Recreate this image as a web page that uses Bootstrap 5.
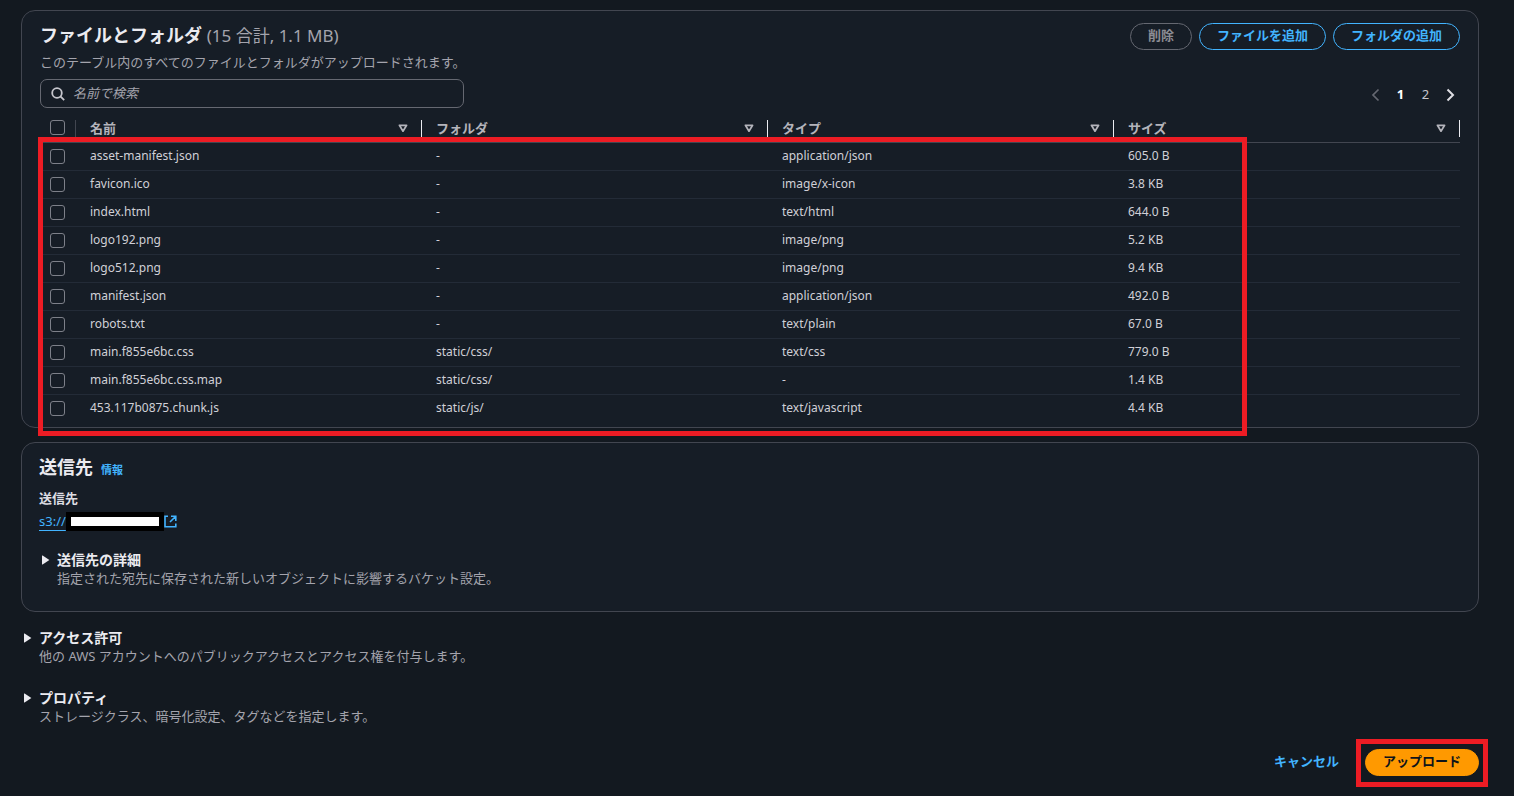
<!DOCTYPE html>
<html lang="ja" data-bs-theme="dark">
<head>
<meta charset="utf-8">
<meta name="viewport" content="width=device-width, initial-scale=1">
<title>アップロード</title>
<link href="https://cdn.jsdelivr.net/npm/bootstrap@5.3.0/dist/css/bootstrap.min.css" rel="stylesheet">
<style>
  body { background: #131920; color: #dedee3; font: 13px/18px "Noto Sans", "Noto Sans CJK JP", sans-serif; padding: 10px 35px 20px 21px; }
  a { color: #42b4ff; text-underline-offset: 4px; }
  .panel { --bs-card-bg: #161d26; --bs-card-border-color: #424650; --bs-card-border-radius: 14px; margin-bottom: 14px; padding: 12px 18px 4px; color: inherit; }
  .panel-target { padding-left: 17px; margin-bottom: 17px; }
  .title { font-size: 18px; line-height: 24px; font-weight: 700; color: #ebebf0; margin: 0; }
  .title span { font-size: 17px; font-weight: 400; }
  .muted, .title span { color: #a4a4ad; }
  .actions { gap: 7px; }
  .pill { --bs-btn-font-size: 13px; --bs-btn-line-height: 23px; --bs-btn-padding-x: 17px; --bs-btn-font-weight: 700; --bs-btn-border-radius: 14px; --bs-btn-color: #42b4ff; --bs-btn-border-color: #42b4ff; --bs-btn-disabled-color: #8c8c94; --bs-btn-disabled-border-color: #656871; --bs-btn-disabled-opacity: 1; padding-top: 0; padding-bottom: 2px; }
  .pill-main { --bs-btn-color: #0f141a; --bs-btn-bg: #ff9900; --bs-btn-border-color: #ff9900; --bs-btn-hover-bg: #ffac33; }
  .pill-link { --bs-btn-border-color: transparent; }
  .note { margin: 3px 0 8px; }
  .search { width: 424px; max-width: 100%; height: 29px; border: 1px solid #656871; border-radius: 7px; padding: 0 10px; gap: 8px; }
  .search input { background: none; border: 0; outline: 0; color: inherit; padding: 0 0 2px; }
  .search input::placeholder { color: #a4a4ad; font-style: italic; opacity: 1; }
  .pager { margin-right: -3px; }
  .pager button { background: none; border: 0; padding: 0; width: 25px; color: #c6c6cd; }
  .listing { margin-top: 5px; }
  .files { --bs-table-bg: transparent; --bs-table-color: inherit; table-layout: fixed; margin: 0; }
  .files > :not(caption) > * > * { height: 28px; padding: 0 14px; border-bottom: 1px solid #232b37; vertical-align: middle; color: #d0d0d7; font-size: 12px; }
  .files > thead > tr > th { height: 29px; padding-top: 2px; border-bottom-color: #424650; color: #b4b4bb; font-size: 13px; }
  .files > tbody > tr:last-child > td { border-bottom-color: transparent; }
  .files > :not(caption) > * > .pick { width: 36px; padding-left: 10px; padding-right: 0; }
  .files .split { border-right: 1px solid #ebebf0; height: 17px; padding-right: 13px; margin-right: -14px; }
  .files .split-dim { border-right: 1px solid #424650; height: 17px; }
  .files .form-check-input { float: none; display: block; width: 15px; height: 15px; margin: 0; border: 1px solid #7d8089; border-radius: 3px; background-color: transparent; }
  .frame { position: absolute; border: 5px solid #ed1c24; pointer-events: none; }
  .frame-rows { top: 24px; bottom: -13px; left: -2px; width: 85.15%; }
  .frame-upload { inset: -10px -9px -11px; }
  .field-label { margin: 10px 0 5px; }
  .redacted { background: #fff; border: 5px solid #000; width: 98px; height: 19px; }
  .info { font-size: 11px; font-weight: 700; text-decoration: none; }
  .expander { background: none; border: 0; padding: 0; gap: 7px; color: #ebebf0; font-size: 14px; line-height: 18px; font-weight: 700; }
  .section { margin-bottom: 24px; padding-left: 1px; }
  .section p, .detail p { padding-left: 17px; margin: 0; }
  .detail { padding: 20px 0 20px 1px; }
</style>
</head>
<body>
<svg class="d-none" aria-hidden="true">
  <symbol id="sort" viewBox="0 0 10 9"><path d="M1.4 1.3h7.2L5 7.2z" fill="none" stroke="currentColor" stroke-width="1.7" stroke-linejoin="round"/></symbol>
  <symbol id="caret" viewBox="0 0 10 10"><path d="M2 .8v8.4q0 .6.6.3L9.4 5 2.600.5Q2 .2 2 .8z" fill="currentColor"/></symbol>
</svg>
<main>
  <section class="card panel">
    <div class="d-flex justify-content-between align-items-start">
      <h2 class="title">ファイルとフォルダ <span>(15 合計, 1.1 MB)</span></h2>
      <div class="actions d-flex">
        <button type="button" class="btn pill" disabled>削除</button>
        <button type="button" class="btn pill">ファイルを追加</button>
        <button type="button" class="btn pill">フォルダの追加</button>
      </div>
    </div>
    <p class="muted note">このテーブル内のすべてのファイルとフォルダがアップロードされます。</p>
    <div class="d-flex justify-content-between align-items-center">
      <label class="search d-flex align-items-center">
        <svg width="14" height="14" viewBox="0 0 14 14" fill="none" stroke="#c6c6cd" stroke-width="1.8" aria-hidden="true"><circle cx="6" cy="6" r="4.8"/><path d="M9.400 9.400 13.200 13.200"/></svg>
        <input type="text" class="flex-fill" placeholder="名前で検索" aria-label="名前で検索">
      </label>
      <nav class="pager d-flex align-items-center" aria-label="ページ">
        <button type="button" aria-label="前へ" disabled><svg width="9" height="14" viewBox="0 0 9 14" fill="none" stroke="#656871" stroke-width="1.7"><path d="M7.500 1.500 2 7l5.500 5.500"/></svg></button>
        <button type="button" class="fw-bold text-white">1</button>
        <button type="button">2</button>
        <button type="button" aria-label="次へ"><svg width="9" height="14" viewBox="0 0 9 14" fill="none" stroke="#dedee3" stroke-width="2"><path d="M1.500 1.500 7 7l-5.500 5.500"/></svg></button>
      </nav>
    </div>
    <div class="listing position-relative">
      <table class="table files" id="files">
        <thead><tr>
          <th class="pick"><div class="split-dim"><input class="form-check-input" type="checkbox" aria-label="すべて選択"></div></th>
          <th scope="col"><div class="split d-flex align-items-center justify-content-between">名前<svg width="10" height="9"><use href="#sort"/></svg></div></th>
          <th scope="col"><div class="split d-flex align-items-center justify-content-between">フォルダ<svg width="10" height="9"><use href="#sort"/></svg></div></th>
          <th scope="col"><div class="split d-flex align-items-center justify-content-between">タイプ<svg width="10" height="9"><use href="#sort"/></svg></div></th>
          <th scope="col"><div class="split d-flex align-items-center justify-content-between">サイズ<svg width="10" height="9"><use href="#sort"/></svg></div></th>
        </tr></thead>
        <tbody>
          <tr><td class="pick"><input class="form-check-input" type="checkbox" aria-label="asset-manifest.json"></td><td>asset-manifest.json</td><td>-</td><td>application/json</td><td>605.0 B</td></tr>
          <tr><td class="pick"><input class="form-check-input" type="checkbox" aria-label="favicon.ico"></td><td>favicon.ico</td><td>-</td><td>image/x-icon</td><td>3.8 KB</td></tr>
          <tr><td class="pick"><input class="form-check-input" type="checkbox" aria-label="index.html"></td><td>index.html</td><td>-</td><td>text/html</td><td>644.0 B</td></tr>
          <tr><td class="pick"><input class="form-check-input" type="checkbox" aria-label="logo192.png"></td><td>logo192.png</td><td>-</td><td>image/png</td><td>5.2 KB</td></tr>
          <tr><td class="pick"><input class="form-check-input" type="checkbox" aria-label="logo512.png"></td><td>logo512.png</td><td>-</td><td>image/png</td><td>9.4 KB</td></tr>
          <tr><td class="pick"><input class="form-check-input" type="checkbox" aria-label="manifest.json"></td><td>manifest.json</td><td>-</td><td>application/json</td><td>492.0 B</td></tr>
          <tr><td class="pick"><input class="form-check-input" type="checkbox" aria-label="robots.txt"></td><td>robots.txt</td><td>-</td><td>text/plain</td><td>67.0 B</td></tr>
          <tr><td class="pick"><input class="form-check-input" type="checkbox" aria-label="main.f855e6bc.css"></td><td>main.f855e6bc.css</td><td>static/css/</td><td>text/css</td><td>779.0 B</td></tr>
          <tr><td class="pick"><input class="form-check-input" type="checkbox" aria-label="main.f855e6bc.css.map"></td><td>main.f855e6bc.css.map</td><td>static/css/</td><td>-</td><td>1.4 KB</td></tr>
          <tr><td class="pick"><input class="form-check-input" type="checkbox" aria-label="453.117b0875.chunk.js"></td><td>453.117b0875.chunk.js</td><td>static/js/</td><td>text/javascript</td><td>4.4 KB</td></tr>
        </tbody>
      </table>
      <div class="frame frame-rows"></div>
    </div>
  </section>

  <section class="card panel panel-target">
    <div class="d-flex align-items-baseline gap-2">
      <h2 class="title">送信先</h2><a class="info" href="#">情報</a>
    </div>
    <div class="field-label fw-bold">送信先</div>
    <div class="d-flex align-items-center">
      <a href="#">s3://</a><span class="redacted"></span>
      <svg width="13" height="13" viewBox="0 0 13 13" fill="none" stroke="#42b4ff" stroke-width="1.600" aria-hidden="true"><path d="M4 1.200H1v10.600h10.800V8.500M7 1.200h4.800v4.800M11.800 1.200 6 7"/></svg>
    </div>
    <div class="detail">
      <button type="button" class="expander d-flex align-items-center"><svg width="10" height="10"><use href="#caret"/></svg>送信先の詳細</button>
      <p class="muted">指定された宛先に保存された新しいオブジェクトに影響するバケット設定。</p>
    </div>
  </section>

  <section class="section">
    <button type="button" class="expander d-flex align-items-center"><svg width="10" height="10"><use href="#caret"/></svg>アクセス許可</button>
    <p class="muted">他の AWS アカウントへのパブリックアクセスとアクセス権を付与します。</p>
  </section>
  <section class="section">
    <button type="button" class="expander d-flex align-items-center"><svg width="10" height="10"><use href="#caret"/></svg>プロパティ</button>
    <p class="muted">ストレージクラス、暗号化設定、タグなどを指定します。</p>
  </section>

  <div class="d-flex justify-content-end gap-2">
    <button type="button" class="btn pill pill-link">キャンセル</button>
    <div class="position-relative">
      <button type="button" class="btn pill pill-main">アップロード</button>
      <div class="frame frame-upload"></div>
    </div>
  </div>
</main>
<script src="https://cdn.jsdelivr.net/npm/bootstrap@5.3.0/dist/js/bootstrap.bundle.min.js"></script>
</body>
</html>
